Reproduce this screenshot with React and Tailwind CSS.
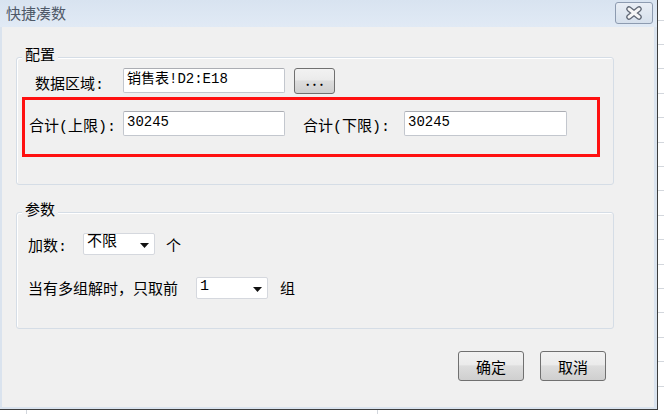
import { useState } from "react";

const ui = { fontFamily: '"Noto Sans CJK SC", "Noto Sans", sans-serif' };
const mono = { fontFamily: '"Liberation Mono", "Noto Sans CJK SC", monospace' };

function Label({ className = "", children }) {
  return (
    <span className={`text-[15px] leading-[16px] text-black ${className}`} style={mono}>
      {children}
    </span>
  );
}

function TextBox({ value, width }) {
  return (
    <div
      className={`${width} h-[25px] bg-white border border-[#c3c7ce] border-t-[#abadb3] rounded-[2px] pl-[3px] text-[14px] leading-[20px] text-black`}
      style={mono}
    >
      {value}
    </div>
  );
}

function Combo({ value }) {
  return (
    <div className="w-[72px] h-[22px] bg-white border border-[#d5d8de] rounded-[2px] flex items-start justify-between pl-[3px] pr-[5px]">
      <span className="text-[15px] leading-[17px] text-black" style={mono}>
        {value}
      </span>
      <svg width="9" height="5" viewBox="0 0 9 5" className="mt-[9px]">
        <path d="M0 0h9L4.5 5z" fill="#111" />
      </svg>
    </div>
  );
}

function WinButton({ children, className = "" }) {
  return (
    <button
      className={`rounded-[3px] border border-[#707070] bg-[linear-gradient(to_bottom,#f2f2f2_0%,#ebebeb_45%,#dddddd_50%,#cfcfcf_100%)] text-black text-[15px] leading-none ${className}`}
      style={ui}
    >
      {children}
    </button>
  );
}

function GroupBox({ title, className = "", children }) {
  return (
    <div
      className={`relative w-[598px] border border-[#d5dde6] rounded-[3px] shadow-[inset_1px_1px_0_#ffffff] ${className}`}
    >
      <span
        className="absolute left-[5px] top-[-12px] px-[3px] bg-[#f0f0f0] text-[15px] leading-[16px] text-black"
        style={ui}
      >
        {title}
      </span>
      {children}
    </div>
  );
}

export default function App() {
  const [range] = useState("销售表!D2:E18");

  return (
    <div className="w-[664px] h-[414px] bg-white flex flex-col overflow-hidden">
      <div className="flex">
        <div className="w-[658px] h-[410px] flex flex-col border-r border-b border-[#3d3d3d] shrink-0">
          {/* title bar */}
          <div className="h-[27px] flex items-start justify-between bg-[linear-gradient(to_bottom,#d8e3f0,#e1eaf5)] pl-[6px] pr-[4px]">
            <span className="text-[15px] leading-[26px] text-[#4f5968]" style={ui}>
              快捷凑数
            </span>
            <div className="mt-[2px] w-[38px] h-[22px] rounded-[3px] border border-[#8d9bb0] bg-[linear-gradient(to_bottom,#e9eef5,#d6e0ec)] flex items-center justify-center">
              <svg width="18" height="14" viewBox="0 0 18 14">
                <path d="M4 3l10 8M14 3L4 11" stroke="#5f6775" strokeWidth="5.5" strokeLinecap="round" />
                <path d="M4 3l10 8M14 3L4 11" stroke="#f6f6f6" strokeWidth="3" strokeLinecap="round" />
              </svg>
            </div>
          </div>

          {/* body */}
          <div className="flex-1 bg-[#f0f0f0] border-l-[2px] border-r-[3px] border-b-[2px] border-[#dae3ee] pl-[14px] pt-[30px]">
            <GroupBox title="配置" className="h-[128px]">
              <div className="px-[5px] pt-[10px]">
                <div className="flex items-start h-[26px]">
                  <Label className="w-[101px] pl-[13px] mt-[10px]">数据区域:</Label>
                  <TextBox value={range} width="w-[162px]" />
                  <WinButton className="ml-[9px] w-[41px] h-[26px] flex items-center justify-center">
                    <span className="tracking-[3px] pl-[3px] font-bold text-[12px]">...</span>
                  </WinButton>
                </div>
                <div className="mt-[3px] w-[578px] h-[60px] border-[3px] border-[#ff1010] pt-[11px] pl-[4px] flex items-start">
                  <Label className="w-[94px] mt-[9px]">合计(上限):</Label>
                  <TextBox value="30245" width="w-[162px]" />
                  <Label className="ml-[18px] w-[101px] mt-[9px]">合计(下限):</Label>
                  <TextBox value="30245" width="w-[163px]" />
                </div>
              </div>
            </GroupBox>

            <GroupBox title="参数" className="h-[117px] mt-[27px]">
              <div className="pl-[11px] pt-[20px]">
                <div className="flex items-start">
                  <Label className="w-[55px] mt-[7px]">加数:</Label>
                  <Combo value="不限" />
                  <Label className="ml-[11px] mt-[7px]">个</Label>
                </div>
                <div className="flex items-start mt-[21px]">
                  <Label className="w-[168px] mt-[6px]">当有多组解时，只取前</Label>
                  <Combo value="1" />
                  <Label className="ml-[12px] mt-[6px]">组</Label>
                </div>
              </div>
            </GroupBox>

            <div className="w-[598px] flex justify-end gap-[16px] pr-[8px] mt-[22px]">
              <WinButton className="w-[66px] h-[30px]">确定</WinButton>
              <WinButton className="w-[66px] h-[30px]">取消</WinButton>
            </div>
          </div>
        </div>
        {/* spreadsheet behind the dialog */}
        <div className="flex-1 bg-[repeating-linear-gradient(to_bottom,transparent_0px,transparent_19.6px,#d3d7dd_19.6px,#d3d7dd_20.6px,transparent_20.6px,transparent_24.4px)]" />
      </div>
      <div className="flex-1 flex">
        <div className="w-[27px] border-r border-[#d3d7dd]" />
        <div className="w-[351px] border-r border-[#d3d7dd]" />
      </div>
    </div>
  );
}
